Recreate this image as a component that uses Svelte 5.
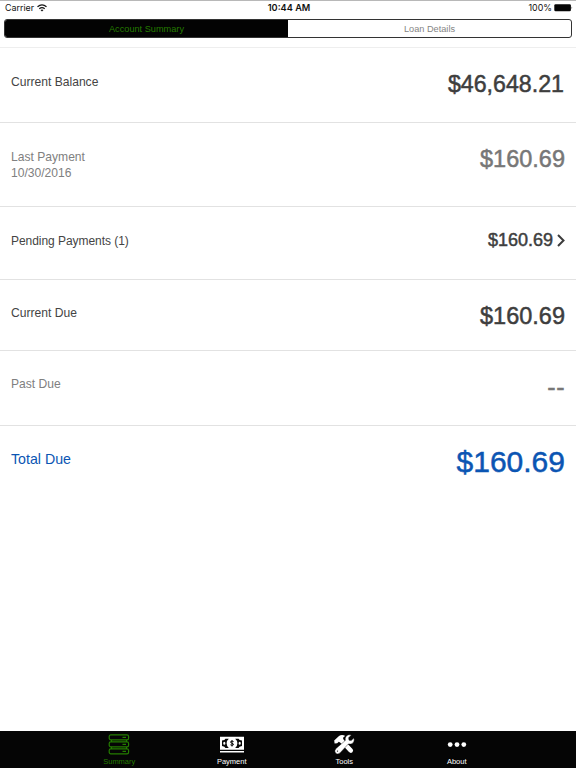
<script lang="ts">
  type Row = { label: string; date?: string; amount: string; kind: string; height: number };

  const rows: Row[] = [
    { label: "Current Balance", amount: "$46,648.21", kind: "balance", height: 75 },
    { label: "Last Payment", date: "10/30/2016", amount: "$160.69", kind: "muted", height: 84 },
    { label: "Pending Payments (1)", amount: "$160.69", kind: "pending", height: 73 },
    { label: "Current Due", amount: "$160.69", kind: "due", height: 71 },
    { label: "Past Due", amount: "--", kind: "muted dashes", height: 75 },
    { label: "Total Due", amount: "$160.69", kind: "total", height: 75 },
  ];

  const tabs = ["Summary", "Payment", "Tools", "About"];
  let view = $state("Account Summary");
  let tab = $state("Summary");
</script>

<div class="screen">
  <header class="status">
    <div class="carrier">
      <span>Carrier</span>
      <svg width="10" height="8" viewBox="0 0 10 8" fill="none" stroke="#111" stroke-width="1.25">
        <path d="M.5 2.8Q5-1 9.5 2.8M2.3 4.7Q5 2.4 7.7 4.7" />
        <path d="M3.5 6Q5 4.8 6.5 6L5 7.6Z" fill="#111" stroke="none" />
      </svg>
    </div>
    <strong>10:44 AM</strong>
    <div class="battery">
      <span>100%</span>
      <svg width="19" height="8" viewBox="0 0 19 8">
        <rect x=".3" y=".3" width="16.6" height="7" rx="1.3" fill="#050505" />
        <path d="M17.6 2.5Q18.8 3.8 17.6 5.1Z" fill="#222" />
      </svg>
    </div>
  </header>

  <div class="segments">
    {#each ["Account Summary", "Loan Details"] as name}
      <button class:active={view === name} onclick={() => (view = name)}>{name}</button>
    {/each}
  </div>

  <main>
    {#each rows as row}
      <section class="row {row.kind}" style="height:{row.height}px">
        <div class="label">
          <div>{row.label}</div>
          {#if row.date}<div>{row.date}</div>{/if}
        </div>
        <div class="amount">
          <span>{row.amount}</span>
          {#if row.kind === "pending"}
            <svg width="8" height="13" viewBox="0 0 8 13" fill="none" stroke="#3c3c3c" stroke-width="2">
              <path d="M1 1L6.5 6.5L1 12" />
            </svg>
          {/if}
        </div>
      </section>
    {/each}
  </main>

  <nav>
    {#each tabs as name}
      <button class:selected={tab === name} onclick={() => (tab = name)}>
        {#if name === "Summary"}
          <svg width="22" height="21" viewBox="0 0 22 21" fill="none" stroke="currentColor" stroke-width="1.2">
            <rect x="1.2" y=".9" width="19.4" height="5" rx="1.6" />
            <rect x="1.2" y="7.9" width="19.4" height="5" rx="1.6" />
            <rect x="1.2" y="14.9" width="19.4" height="5" rx="1.6" />
            <path d="M3.5 6v2M18.5 6v2M3.5 13v2M18.5 13v2M14.5 3.4h3.5M14.5 10.4h3.5M14.5 17.4h3.5" />
          </svg>
        {:else if name === "Payment"}
          <svg width="26" height="21" viewBox="0 0 26 21">
            <path d="M1 2.8h24v13H1zM1 16.9h24v1.5H1z" fill="#fff" />
            <path d="M6.4 4.7H9.8Q7.6 6.5 7.6 9.3T9.8 13.9H6.4Q6.1 12.4 3 12V6.6Q6.1 6.2 6.4 4.7zM19.6 4.7h-3.4Q18.4 6.5 18.4 9.3T16.2 13.9h3.4q.3-1.5 3.4-1.9V6.6q-3.1-.4-3.4-1.9z" fill="#080808" />
            <path d="M4.2 9.3a1.1 1.5 0 1 0 2.2 0a1.1 1.5 0 1 0-2.2 0M19.6 9.3a1.1 1.5 0 1 0 2.2 0a1.1 1.5 0 1 0-2.2 0" fill="#fff" />
            <path d="M14.6 7.6Q13 6.7 11.7 7.6Q11.1 8.7 13 9.2Q15 9.8 14.3 10.9Q13 11.8 11.4 10.8M13 6v6.5" fill="none" stroke="#080808" />
          </svg>
        {:else if name === "Tools"}
          <svg width="22" height="21" viewBox="0 0 22 21" fill="#fff">
            <path d="M1.2 6.4L1.6 9.5L4.2 9.2L5.8 7.7L7.4 8.7L16 18.1Q17.7 19.7 19.4 18.2Q20.9 16.6 19.5 15L10.5 5.6L10 4.1Q10.8 2.3 12.4 1.9Q8.8.3 6 2Z" />
            <path d="M20.9 4Q22 7.5 19.4 9.4Q17.6 10.5 15.4 9.9L7 18.9Q4.7 20.8 2.5 19Q.9 16.9 2.8 14.7L12.3 6.5Q11.6 4.1 13.2 2.2Q15.3.1 18.4 1L15.6 3.8L16 6.2L18.2 6.6Z" stroke="#080808" stroke-width=".4" />
            <circle cx="4.5" cy="17.1" r=".7" fill="#080808" />
          </svg>
        {:else}
          <svg width="22" height="21" viewBox="0 0 22 21" fill="#fff">
            <circle cx="4.2" cy="10.6" r="2.4" />
            <circle cx="11" cy="10.6" r="2.4" />
            <circle cx="17.8" cy="10.6" r="2.4" />
          </svg>
        {/if}
        <span>{name}</span>
      </button>
    {/each}
  </nav>
</div>

<style>
  :global(body) {
    margin: 0;
    background: #fff;
  }

  .screen {
    width: 576px;
    height: 768px;
    box-sizing: border-box;
    display: flex;
    flex-direction: column;
    border-top: 1px solid #b8b8b8;
    font-family: "Liberation Sans", Arial, sans-serif;
    color: #444;
  }

  .status {
    height: 14px;
    display: grid;
    grid-template-columns: 1fr auto 1fr;
    align-items: center;
    padding: 0 3px 0 5px;
    font: 8.9px/14px Inter, sans-serif;
    color: #111;
  }

  .status strong {
    font-weight: 600;
    font-size: 9.2px;
  }

  .carrier,
  .battery {
    display: flex;
    align-items: center;
    gap: 3px;
  }

  .battery {
    justify-content: flex-end;
    gap: 2px;
  }

  button {
    margin: 0;
    padding: 0;
    border: 0;
    background: none;
    font-family: inherit;
  }

  .segments {
    display: grid;
    grid-template-columns: 1fr 1fr;
    height: 19px;
    box-sizing: border-box;
    margin: 4px 4px 9px;
    border: 1px solid #333;
    border-radius: 3px;
    overflow: hidden;
  }

  .segments button {
    font-size: 9.2px;
    line-height: 15px;
    padding-top: 1px;
    color: #858585;
  }

  .segments .active {
    background: #030303;
    color: #247c00;
  }

  main {
    flex: 1;
    border-top: 1px solid #eee;
  }

  .row {
    display: flex;
    justify-content: space-between;
    box-sizing: border-box;
    padding: 26px 11px 0;
    border-bottom: 1px solid #e2e2e2;
  }

  .row:last-child {
    border: 0;
  }

  .due,
  .dashes,
  .total {
    padding-top: 25px;
  }

  .label {
    font-size: 12.1px;
    line-height: 16px;
  }

  .pending .label {
    font-size: 12px;
    letter-spacing: -0.05px;
  }

  .amount {
    display: flex;
    height: 20px;
    align-items: center;
    font-size: 23.5px;
    color: #3e3e3e;
    -webkit-text-stroke: 0.5px currentColor;
  }

  .balance .amount {
    font-size: 23.2px;
    padding-right: 1px;
  }

  .due .amount {
    height: 22px;
  }

  .muted .label {
    color: #808080;
  }

  .muted .amount {
    color: #777;
  }

  .dashes .amount {
    height: 22px;
    font-size: 25px;
    letter-spacing: 0.5px;
  }

  .pending .amount {
    gap: 4px;
    height: 15px;
    font-size: 18px;
  }

  .total .label {
    font-size: 14.2px;
    color: #0b55b3;
  }

  .total .amount {
    font-size: 30px;
    height: 22px;
    color: #0b55b3;
  }

  nav {
    height: 37px;
    display: grid;
    grid-template-columns: repeat(4, 112.5px);
    justify-content: center;
    background: #050505;
  }

  nav button {
    display: flex;
    flex-direction: column;
    align-items: center;
    padding-top: 3px;
    gap: 1px;
    color: #fff;
    font: 7.5px/11px "Liberation Sans", sans-serif;
  }

  nav .selected {
    color: #247c00;
  }
</style>
